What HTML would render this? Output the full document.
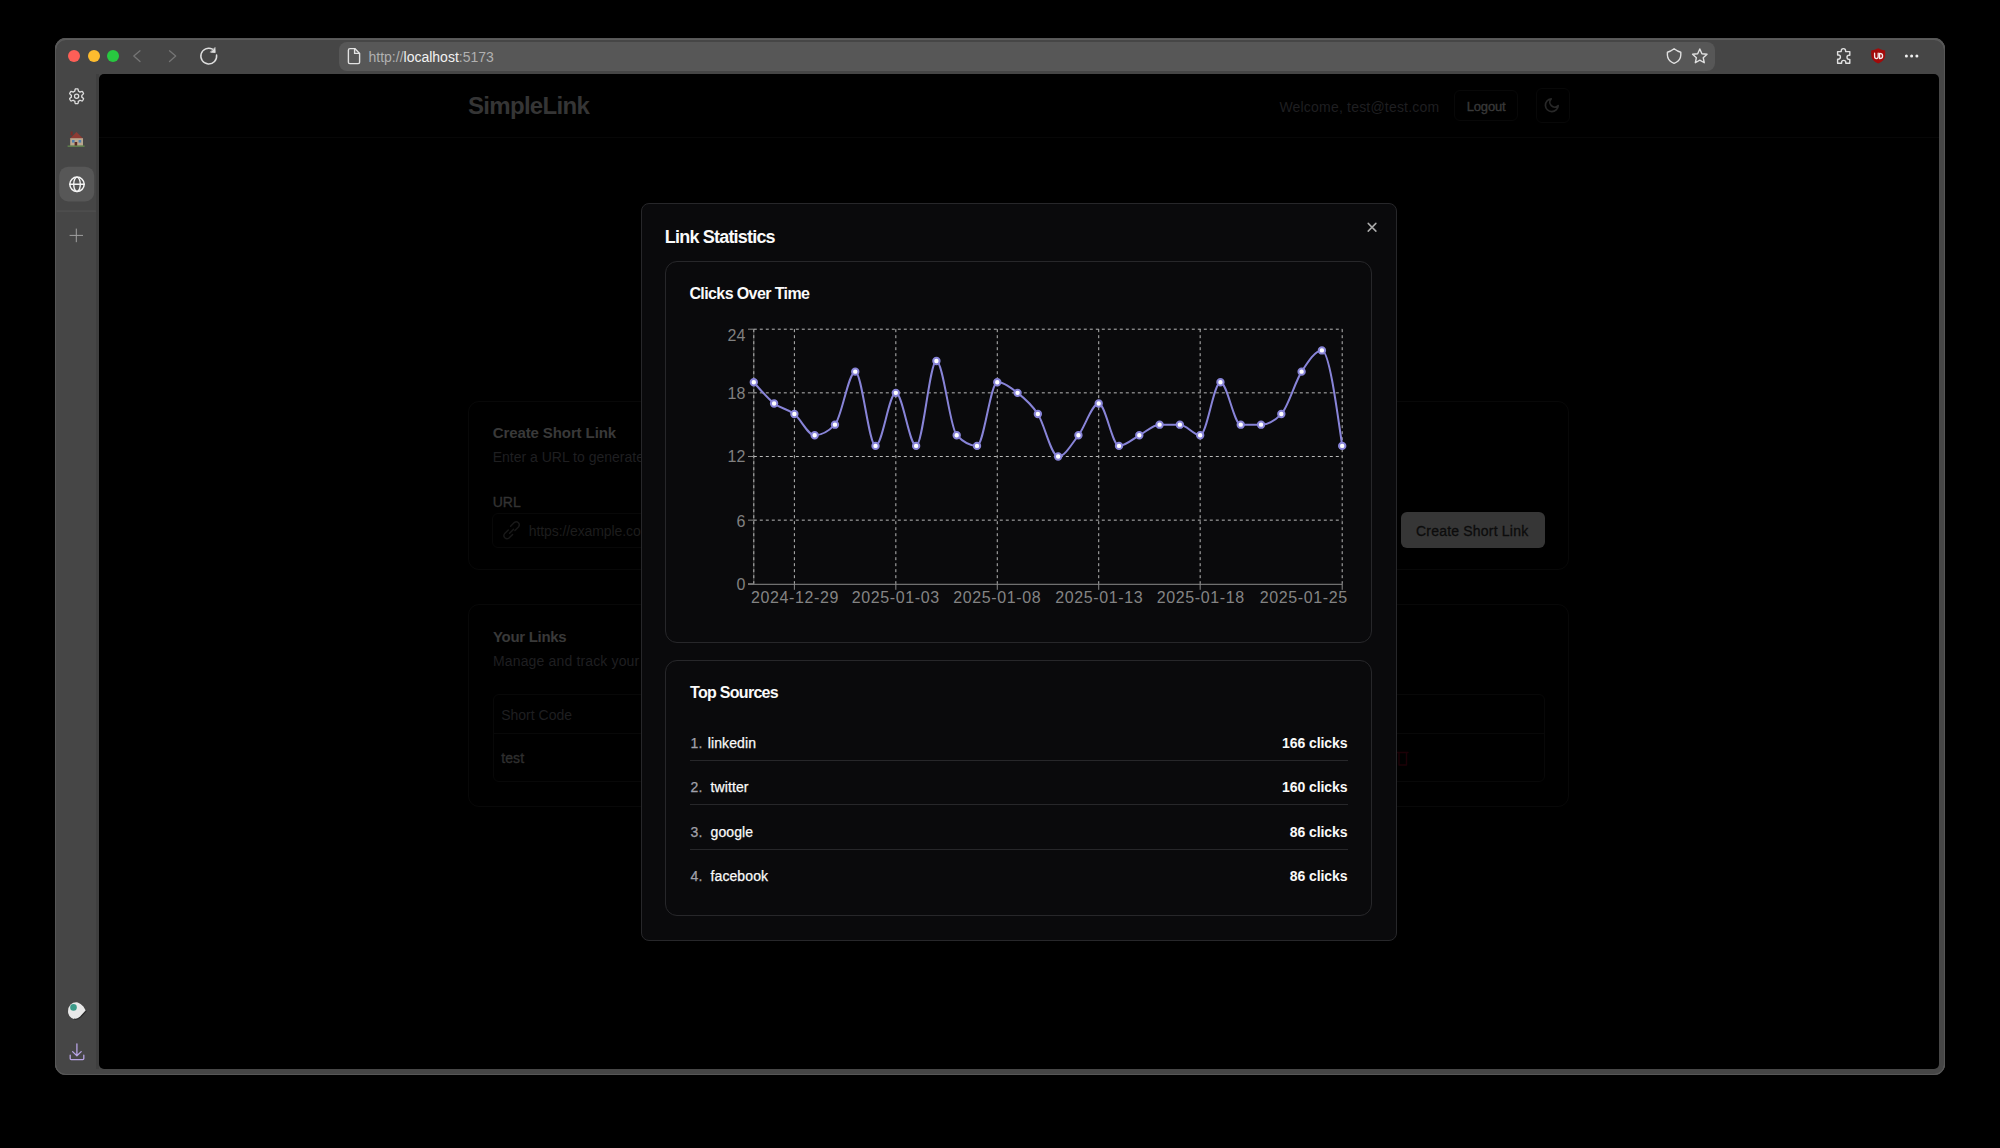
<!DOCTYPE html>
<html><head><meta charset="utf-8">
<style>
*{box-sizing:border-box;margin:0;padding:0}
html,body{width:2000px;height:1148px;background:#000;overflow:hidden;font-family:"Liberation Sans",sans-serif}
.a{position:absolute}
.t{position:absolute;white-space:pre}
svg{position:absolute;left:0;top:0}
</style></head><body>
<div class="a" style="left:55px;top:37.6px;width:1890px;height:1037.4px;background:#464646;border-radius:11px;box-shadow:inset 0 0 0 1px #575757,inset 0 1px 0 1px #5c5c5c"></div>
<div class="a" style="left:68px;top:50.2px;width:12px;height:12.0px;background:#fe5f57;border-radius:50%"></div>
<div class="a" style="left:87.7px;top:50.2px;width:12.0px;height:12.0px;background:#febc2e;border-radius:50%"></div>
<div class="a" style="left:107.2px;top:50.2px;width:12.0px;height:12.0px;background:#28c840;border-radius:50%"></div>
<div class="a" style="left:339px;top:41.5px;width:1375.5px;height:29.0px;background:#575757;border-radius:8px"></div>
<div class="t" style="left:368.5px;top:50.35px;font-size:14px;line-height:14px;color:#b0b0b0;font-weight:400;letter-spacing:0px;">http://<span style="color:#f2f2f2">localhost</span>:5173</div>
<div class="a" style="left:95.5px;top:74px;width:3.0px;height:995px;background:#3f3f3f"></div>
<div class="a" style="left:98.5px;top:74px;width:1840.3px;height:995px;background:#000;border-radius:5px"></div>
<div class="t" style="left:468px;top:93.98px;font-size:24px;line-height:24px;color:#353535;font-weight:700;letter-spacing:-0.7px;">SimpleLink</div>
<div class="a" style="left:98.5px;top:137px;width:1840.0px;height:1px;background:#070707"></div>
<div class="t" style="left:1279.4px;top:99.65px;font-size:14px;line-height:14px;color:#1f1f21;font-weight:400;letter-spacing:0.2px;">Welcome, test@test.com</div>
<div class="a" style="left:1454px;top:89.6px;width:64px;height:31.0px;border:1px solid #080808;border-radius:6px"></div>
<div class="t" style="left:1466.8px;top:99.60px;font-size:13px;line-height:13px;color:#393939;font-weight:400;letter-spacing:-0.2px;-webkit-text-stroke:0.35px #393939">Logout</div>
<div class="a" style="left:1535.5px;top:88px;width:34.09999999999991px;height:35px;border:1px solid #080808;border-radius:6px"></div>
<div class="a" style="left:468px;top:400.5px;width:1101px;height:169.79999999999995px;border:1px solid #080808;border-radius:11px"></div>
<div class="t" style="left:492.7px;top:424.70px;font-size:15px;line-height:15px;color:#393939;font-weight:700;letter-spacing:-0.1px;">Create Short Link</div>
<div class="t" style="left:492.7px;top:449.55px;font-size:14px;line-height:14px;color:#1f1f21;font-weight:400;letter-spacing:0px;">Enter a URL to generate a short link</div>
<div class="t" style="left:492.7px;top:494.55px;font-size:14px;line-height:14px;color:#333333;font-weight:400;letter-spacing:0px;-webkit-text-stroke:0.35px #333333">URL</div>
<div class="a" style="left:492px;top:512.8px;width:893px;height:34.90000000000009px;border:1px solid #080808;border-radius:6px"></div>
<div class="t" style="left:528.8px;top:523.65px;font-size:14px;line-height:14px;color:#1d1d1d;font-weight:400;letter-spacing:-0.1px;">https://example.com</div>
<div class="a" style="left:1401px;top:512.3px;width:144px;height:35.40000000000009px;background:#363636;border-radius:6px"></div>
<div class="t" style="left:1416px;top:523.65px;font-size:14px;line-height:14px;color:#0c0c0c;font-weight:400;letter-spacing:0.2px;-webkit-text-stroke:0.3px #0c0c0c">Create Short Link</div>
<div class="a" style="left:468px;top:603.6px;width:1101px;height:203.10000000000002px;border:1px solid #080808;border-radius:11px"></div>
<div class="t" style="left:493px;top:629.30px;font-size:15px;line-height:15px;color:#393939;font-weight:700;letter-spacing:-0.3px;">Your Links</div>
<div class="t" style="left:493px;top:654.05px;font-size:14px;line-height:14px;color:#1f1f21;font-weight:400;letter-spacing:0.15px;">Manage and track your shortened links</div>
<div class="a" style="left:492.6px;top:693.7px;width:1052.1999999999998px;height:88.09999999999991px;border:1px solid #080808;border-radius:6px"></div>
<div class="a" style="left:493.6px;top:733.4px;width:1050.1999999999998px;height:1.0px;background:#080808"></div>
<div class="t" style="left:501.2px;top:708.15px;font-size:14px;line-height:14px;color:#1f1f21;font-weight:400;letter-spacing:0px;">Short Code</div>
<div class="t" style="left:501.2px;top:751.35px;font-size:14px;line-height:14px;color:#2f2f2f;font-weight:400;letter-spacing:0.1px;-webkit-text-stroke:0.35px #2f2f2f">test</div>
<svg width="2000" height="1148" viewBox="0 0 2000 1148" fill="none" stroke-linecap="round" stroke-linejoin="round">
<path d="M140,50.8 L133.8,56 L140,61.5" stroke="#757575" stroke-width="1.3"/>
<path d="M169.5,50.8 L175.7,56 L169.5,61.5" stroke="#757575" stroke-width="1.3"/>
<path d="M216.57,55.00 A7.9,7.9 0 1 1 212.46,49.12" stroke="#dedede" stroke-width="1.5"/>
<path d="M215,47.9 L215.2,52.6 L210.8,52.2 Z" fill="#dedede" stroke="#dedede" stroke-width="0.8"/>
<path d="M350,48.6 L354.8,48.6 L359.6,53.6 L359.6,62.2 Q359.6,63.6 358.2,63.6 L349.8,63.6 Q348.4,63.6 348.4,62.2 L348.4,50.2 Q348.4,48.6 350,48.6 Z" stroke="#e2e2e2" stroke-width="1.4"/>
<path d="M354.6,48.8 L354.6,53.4 L359.4,53.4" stroke="#e2e2e2" stroke-width="1.4"/>
<path d="M1674.1,48.8 Q1670.5,51.6 1667.4,52.3 Q1667.2,55.5 1667.8,57.6 Q1669.2,61.5 1674.1,63.4 Q1679,61.5 1680.4,57.6 Q1681,55.5 1680.8,52.3 Q1677.7,51.6 1674.1,48.8 Z" stroke="#e0e0e0" stroke-width="1.4"/>
<path d="M1699.80,49.00 L1701.92,53.69 L1707.03,54.25 L1703.22,57.71 L1704.27,62.75 L1699.80,60.20 L1695.33,62.75 L1696.38,57.71 L1692.57,54.25 L1697.68,53.69 Z" stroke="#e0e0e0" stroke-width="1.4"/>
<path d="M1841.2,50.8 Q1841.2,48.6 1843.4,48.6 Q1845.6,48.6 1845.6,50.8 L1845.6,51.6 L1849.8,51.6 L1849.8,55.2 L1849,55.2 Q1847,55.2 1847,57.3 Q1847,59.4 1849,59.4 L1849.8,59.4 L1849.8,63.2 L1845.8,63.2 L1845.8,62.4 Q1845.8,60.4 1843.7,60.4 Q1841.6,60.4 1841.6,62.4 L1841.6,63.2 L1837.6,63.2 L1837.6,59.2 L1838.4,59.2 Q1840.4,59.2 1840.4,57.1 Q1840.4,55 1838.4,55 L1837.6,55 L1837.6,51.6 L1841.2,51.6 Z" stroke="#e0e0e0" stroke-width="1.4"/>
<path d="M1878.2,48.3 Q1881.8,50.3 1885.2,50.6 L1885.2,55 Q1885,60.8 1878.2,63.6 Q1871.4,60.8 1871.2,55 L1871.2,50.6 Q1874.6,50.3 1878.2,48.3 Z" fill="#a30a0a"/>
<path d="M1874.6,53.2 L1874.6,56.6 Q1874.6,58.6 1876.4,58.6 Q1878.2,58.6 1878.2,56.6 L1878.2,53.2" stroke="#f4eaea" stroke-width="1.3"/>
<path d="M1879.6,53.4 L1879.6,58.6 Q1882.6,58.6 1882.6,56 Q1882.6,53.4 1879.6,53.4" stroke="#f4eaea" stroke-width="1.3"/>
<circle cx="1906.4" cy="56.1" r="1.5" fill="#f0f0f0"/>
<circle cx="1911.6" cy="56.1" r="1.5" fill="#f0f0f0"/>
<circle cx="1916.9" cy="56.1" r="1.5" fill="#f0f0f0"/>
<path d="M76.60,88.80 L76.92,88.81 L77.24,88.83 L77.57,88.86 L77.88,88.91 L78.09,89.47 L78.24,90.07 L78.35,90.66 L78.41,91.22 L78.63,91.30 L78.84,91.40 L79.05,91.50 L79.25,91.61 L79.45,91.73 L79.64,91.86 L79.83,92.00 L80.01,92.14 L80.52,91.92 L81.09,91.71 L81.68,91.54 L82.27,91.44 L82.47,91.70 L82.66,91.96 L82.84,92.22 L83.01,92.50 L83.16,92.78 L83.31,93.07 L83.44,93.37 L83.55,93.67 L83.17,94.13 L82.73,94.56 L82.27,94.94 L81.82,95.28 L81.85,95.51 L81.88,95.74 L81.89,95.97 L81.90,96.20 L81.89,96.43 L81.88,96.66 L81.85,96.89 L81.82,97.12 L82.27,97.46 L82.73,97.84 L83.17,98.27 L83.55,98.73 L83.44,99.03 L83.31,99.33 L83.16,99.62 L83.01,99.90 L82.84,100.18 L82.66,100.44 L82.47,100.70 L82.27,100.96 L81.68,100.86 L81.09,100.69 L80.52,100.48 L80.01,100.26 L79.83,100.40 L79.64,100.54 L79.45,100.67 L79.25,100.79 L79.05,100.90 L78.84,101.00 L78.63,101.10 L78.41,101.18 L78.35,101.74 L78.24,102.33 L78.09,102.93 L77.88,103.49 L77.57,103.54 L77.24,103.57 L76.92,103.59 L76.60,103.60 L76.28,103.59 L75.96,103.57 L75.63,103.54 L75.32,103.49 L75.11,102.93 L74.96,102.33 L74.85,101.74 L74.79,101.18 L74.57,101.10 L74.36,101.00 L74.15,100.90 L73.95,100.79 L73.75,100.67 L73.56,100.54 L73.37,100.40 L73.19,100.26 L72.68,100.48 L72.11,100.69 L71.52,100.86 L70.93,100.96 L70.73,100.70 L70.54,100.44 L70.36,100.18 L70.19,99.90 L70.04,99.62 L69.89,99.33 L69.76,99.03 L69.65,98.73 L70.03,98.27 L70.47,97.84 L70.93,97.46 L71.38,97.12 L71.35,96.89 L71.32,96.66 L71.31,96.43 L71.30,96.20 L71.31,95.97 L71.32,95.74 L71.35,95.51 L71.38,95.28 L70.93,94.94 L70.47,94.56 L70.03,94.13 L69.65,93.67 L69.76,93.37 L69.89,93.07 L70.04,92.78 L70.19,92.50 L70.36,92.22 L70.54,91.96 L70.73,91.70 L70.93,91.44 L71.52,91.54 L72.11,91.71 L72.68,91.92 L73.19,92.14 L73.37,92.00 L73.56,91.86 L73.75,91.73 L73.95,91.61 L74.15,91.50 L74.36,91.40 L74.57,91.30 L74.79,91.22 L74.85,90.66 L74.96,90.07 L75.11,89.47 L75.32,88.91 L75.63,88.86 L75.96,88.83 L76.28,88.81 L76.60,88.80 Z" stroke="#dcdcdc" stroke-width="1.35"/>
<circle cx="76.6" cy="96.2" r="2.1" stroke="#dcdcdc" stroke-width="1.3"/>
<rect x="59.3" y="166.7" width="34.9" height="34.8" rx="9" fill="#575757"/>
<circle cx="77" cy="184.3" r="7.2" stroke="#f4f4f4" stroke-width="1.5"/>
<ellipse cx="77" cy="184.3" rx="3.3" ry="7.2" stroke="#f4f4f4" stroke-width="1.4"/>
<path d="M69.8,184.3 L84.2,184.3" stroke="#f4f4f4" stroke-width="1.4"/>
<rect x="56.6" y="210.6" width="39.2" height="1" fill="#545454"/>
<path d="M76.3,228.6 L76.3,242.2 M69.6,235.4 L83,235.4" stroke="#a0a0a0" stroke-width="1" stroke-linecap="butt"/>
<path d="M69.5,139 L76.5,132 L83.5,139 Z" fill="#8e3b33"/>
<rect x="70.2" y="138.2" width="12.8" height="8" fill="#b9a78e"/>
<rect x="70.6" y="131.5" width="2" height="4" fill="#7a2d28"/>
<rect x="72" y="140" width="2.6" height="2.6" fill="#4f7fae"/>
<rect x="78.6" y="140" width="2.6" height="2.6" fill="#4f7fae"/>
<rect x="74.6" y="142" width="2.6" height="4.2" fill="#5a2a22"/>
<rect x="67.6" y="145.4" width="17" height="1.6" fill="#5d7d4c"/>
<path d="M70.5,1004.6 Q73.5,1001.8 77.8,1002.4 Q80.6,1003.2 83.4,1006.5 L86,1011 L80.5,1017 Q77,1019.8 74.5,1019.2 Q69.5,1018.2 68.2,1013.2 Q67.4,1008.2 70.5,1004.6 Z" fill="#e8e8e8"/>
<path d="M86,1011 L80.5,1017 Q77,1019.8 74.5,1019.2" stroke="#2a2a2a" stroke-width="1.2"/>
<circle cx="73.5" cy="1007.4" r="3.3" fill="#3a9a88"/>
<path d="M76.9,1043.8 L76.9,1055.6 M72.6,1051.6 L76.9,1055.8 L81.2,1051.6 M70.2,1055.2 L70.2,1058.6 Q70.2,1059.6 71.2,1059.6 L82.8,1059.6 Q83.8,1059.6 83.8,1058.6 L83.8,1055.2" stroke="#b7a3e3" stroke-width="1.3"/>
<path d="M1551.2,98.8 A6.4,6.4 0 1 0 1558.2,105.6 A4.8,4.8 0 0 1 1551.2,98.8 Z" stroke="#282828" stroke-width="1.7"/>
<path d="M510.6,526.2 L514.2,522.6 Q516.4,520.8 518.4,522.8 Q520.3,524.8 518.5,527 L514.9,530.6" stroke="#191919" stroke-width="1.4"/>
<path d="M512.6,534.4 L509,538 Q506.8,539.8 504.8,537.8 Q502.9,535.8 504.7,533.6 L508.3,530" stroke="#191919" stroke-width="1.4"/>
<path d="M509.6,533.2 L513.6,529.2" stroke="#191919" stroke-width="1.4"/>
<path d="M1397,752.5 L1408,752.5 M1399,752.5 L1399,765 L1406.5,765 L1406.5,752.5" stroke="#1c0006" stroke-width="1.4"/>
</svg>
<div class="a" style="left:641px;top:203.3px;width:755.5px;height:737.5px;background:#0a0a0c;border:1px solid #27272a;border-radius:8px"></div>
<div class="t" style="left:664.8px;top:227.96px;font-size:18px;line-height:18px;color:#fafafa;font-weight:700;letter-spacing:-0.8px;">Link Statistics</div>
<svg width="2000" height="1148" viewBox="0 0 2000 1148"><path d="M1368.2,223.4 L1375.9,231.1 M1375.9,223.4 L1368.2,231.1" stroke="#ababab" stroke-width="1.5" stroke-linecap="round"/></svg>
<div class="a" style="left:665px;top:260.8px;width:706.5999999999999px;height:382.40000000000003px;border:1px solid #27272a;border-radius:12px"></div>
<div class="t" style="left:689.4px;top:286.26px;font-size:16px;line-height:16px;color:#fafafa;font-weight:700;letter-spacing:-0.6px;">Clicks Over Time</div>
<div class="a" style="left:665px;top:660.3px;width:706.5999999999999px;height:255.9000000000001px;border:1px solid #27272a;border-radius:12px"></div>
<div class="t" style="left:690px;top:685.46px;font-size:16px;line-height:16px;color:#fafafa;font-weight:700;letter-spacing:-0.7px;">Top Sources</div>
<div class="t" style="left:690.6px;top:736.05px;font-size:14px;line-height:14px;color:#a1a1aa;font-weight:400;letter-spacing:0px;-webkit-text-stroke:0.25px #a1a1aa">1.</div>
<div class="t" style="left:707.8px;top:736.05px;font-size:14px;line-height:14px;color:#fafafa;font-weight:400;letter-spacing:0.1px;-webkit-text-stroke:0.25px #fafafa">linkedin</div>
<div class="t" style="right:652.5999999999999px;top:736.05px;font-size:14px;line-height:14px;color:#fafafa;font-weight:700;letter-spacing:-0.08px;">166 clicks</div>
<div class="a" style="left:690px;top:760.0px;width:657.5px;height:1.0px;background:#27272a"></div>
<div class="t" style="left:690.6px;top:780.35px;font-size:14px;line-height:14px;color:#a1a1aa;font-weight:400;letter-spacing:0px;-webkit-text-stroke:0.25px #a1a1aa">2.</div>
<div class="t" style="left:710.5px;top:780.35px;font-size:14px;line-height:14px;color:#fafafa;font-weight:400;letter-spacing:0.1px;-webkit-text-stroke:0.25px #fafafa">twitter</div>
<div class="t" style="right:652.5999999999999px;top:780.35px;font-size:14px;line-height:14px;color:#fafafa;font-weight:700;letter-spacing:-0.08px;">160 clicks</div>
<div class="a" style="left:690px;top:804.25px;width:657.5px;height:1.0px;background:#27272a"></div>
<div class="t" style="left:690.6px;top:824.65px;font-size:14px;line-height:14px;color:#a1a1aa;font-weight:400;letter-spacing:0px;-webkit-text-stroke:0.25px #a1a1aa">3.</div>
<div class="t" style="left:710.5px;top:824.65px;font-size:14px;line-height:14px;color:#fafafa;font-weight:400;letter-spacing:0.1px;-webkit-text-stroke:0.25px #fafafa">google</div>
<div class="t" style="right:652.5999999999999px;top:824.65px;font-size:14px;line-height:14px;color:#fafafa;font-weight:700;letter-spacing:-0.08px;">86 clicks</div>
<div class="a" style="left:690px;top:848.5px;width:657.5px;height:1.0px;background:#27272a"></div>
<div class="t" style="left:690.6px;top:868.95px;font-size:14px;line-height:14px;color:#a1a1aa;font-weight:400;letter-spacing:0px;-webkit-text-stroke:0.25px #a1a1aa">4.</div>
<div class="t" style="left:710.5px;top:868.95px;font-size:14px;line-height:14px;color:#fafafa;font-weight:400;letter-spacing:0.1px;-webkit-text-stroke:0.25px #fafafa">facebook</div>
<div class="t" style="right:652.5999999999999px;top:868.95px;font-size:14px;line-height:14px;color:#fafafa;font-weight:700;letter-spacing:-0.08px;">86 clicks</div>
<svg width="2000" height="1148" viewBox="0 0 2000 1148">
<line x1="753.8" y1="329.2" x2="753.8" y2="583.8" stroke="#4a4a4a"/>
<line x1="753.8" y1="520.15" x2="1342.2" y2="520.15" stroke="#b8b8b8" stroke-dasharray="3 3"/>
<line x1="753.8" y1="456.50" x2="1342.2" y2="456.50" stroke="#b8b8b8" stroke-dasharray="3 3"/>
<line x1="753.8" y1="392.85" x2="1342.2" y2="392.85" stroke="#b8b8b8" stroke-dasharray="3 3"/>
<line x1="753.8" y1="329.20" x2="1342.2" y2="329.20" stroke="#b8b8b8" stroke-dasharray="3 3"/>
<line x1="753.80" y1="329.2" x2="753.80" y2="583.8" stroke="#b8b8b8" stroke-dasharray="3 3"/>
<line x1="794.38" y1="329.2" x2="794.38" y2="583.8" stroke="#b8b8b8" stroke-dasharray="3 3"/>
<line x1="895.83" y1="329.2" x2="895.83" y2="583.8" stroke="#b8b8b8" stroke-dasharray="3 3"/>
<line x1="997.28" y1="329.2" x2="997.28" y2="583.8" stroke="#b8b8b8" stroke-dasharray="3 3"/>
<line x1="1098.72" y1="329.2" x2="1098.72" y2="583.8" stroke="#b8b8b8" stroke-dasharray="3 3"/>
<line x1="1200.17" y1="329.2" x2="1200.17" y2="583.8" stroke="#b8b8b8" stroke-dasharray="3 3"/>
<line x1="1342.20" y1="329.2" x2="1342.20" y2="583.8" stroke="#b8b8b8" stroke-dasharray="3 3"/>
<line x1="748" y1="583.80" x2="753.8" y2="583.80" stroke="#888"/>
<line x1="748" y1="520.15" x2="753.8" y2="520.15" stroke="#888"/>
<line x1="748" y1="456.50" x2="753.8" y2="456.50" stroke="#888"/>
<line x1="748" y1="392.85" x2="753.8" y2="392.85" stroke="#888"/>
<line x1="748" y1="329.20" x2="753.8" y2="329.20" stroke="#888"/>
<line x1="748" y1="584.3" x2="1342.2" y2="584.3" stroke="#8a8a8a"/>
<line x1="794.38" y1="583.8" x2="794.38" y2="589.8" stroke="#8a8a8a"/>
<line x1="895.83" y1="583.8" x2="895.83" y2="589.8" stroke="#8a8a8a"/>
<line x1="997.28" y1="583.8" x2="997.28" y2="589.8" stroke="#8a8a8a"/>
<line x1="1098.72" y1="583.8" x2="1098.72" y2="589.8" stroke="#8a8a8a"/>
<line x1="1200.17" y1="583.8" x2="1200.17" y2="589.8" stroke="#8a8a8a"/>
<line x1="1342.20" y1="583.8" x2="1342.20" y2="589.8" stroke="#8a8a8a"/>
</svg>
<div class="t" style="right:1254.6px;top:328.46px;font-size:16px;line-height:16px;color:#808080;font-weight:400;letter-spacing:0px;">24</div>
<div class="t" style="right:1254.6px;top:385.76px;font-size:16px;line-height:16px;color:#808080;font-weight:400;letter-spacing:0px;">18</div>
<div class="t" style="right:1254.6px;top:449.36px;font-size:16px;line-height:16px;color:#808080;font-weight:400;letter-spacing:0px;">12</div>
<div class="t" style="right:1254.6px;top:513.96px;font-size:16px;line-height:16px;color:#808080;font-weight:400;letter-spacing:0px;">6</div>
<div class="t" style="right:1254.6px;top:577.26px;font-size:16px;line-height:16px;color:#808080;font-weight:400;letter-spacing:0px;">0</div>
<div class="t" style="left:750.9px;top:590.06px;font-size:16px;line-height:16px;color:#848484;font-weight:400;letter-spacing:0.62px;">2024-12-29</div>
<div class="t" style="left:851.7px;top:590.06px;font-size:16px;line-height:16px;color:#848484;font-weight:400;letter-spacing:0.62px;">2025-01-03</div>
<div class="t" style="left:953.2px;top:590.06px;font-size:16px;line-height:16px;color:#848484;font-weight:400;letter-spacing:0.62px;">2025-01-08</div>
<div class="t" style="left:1055.2px;top:590.06px;font-size:16px;line-height:16px;color:#848484;font-weight:400;letter-spacing:0.62px;">2025-01-13</div>
<div class="t" style="left:1156.7px;top:590.06px;font-size:16px;line-height:16px;color:#848484;font-weight:400;letter-spacing:0.62px;">2025-01-18</div>
<div class="t" style="left:1259.7px;top:590.06px;font-size:16px;line-height:16px;color:#848484;font-weight:400;letter-spacing:0.62px;">2025-01-25</div>
<svg width="2000" height="1148" viewBox="0 0 2000 1148">
<path d="M753.80,382.24C760.56,390.20,767.33,398.15,774.09,403.46C780.85,408.76,787.62,408.76,794.38,414.07C801.14,419.37,807.91,435.28,814.67,435.28C821.43,435.28,828.20,431.75,834.96,424.67C841.72,417.60,848.49,371.63,855.25,371.63C862.01,371.63,868.77,445.89,875.54,445.89C882.30,445.89,889.06,392.85,895.83,392.85C902.59,392.85,909.35,445.89,916.12,445.89C922.88,445.89,929.64,361.02,936.41,361.02C943.17,361.02,949.93,428.21,956.70,435.28C963.46,442.36,970.22,445.89,976.99,445.89C983.75,445.89,990.51,382.24,997.28,382.24C1004.04,382.24,1010.80,387.55,1017.57,392.85C1024.33,398.15,1031.09,403.46,1037.86,414.07C1044.62,424.67,1051.38,456.50,1058.14,456.50C1064.91,456.50,1071.67,444.12,1078.43,435.28C1085.20,426.44,1091.96,403.46,1098.72,403.46C1105.49,403.46,1112.25,445.89,1119.01,445.89C1125.78,445.89,1132.54,438.82,1139.30,435.28C1146.07,431.75,1152.83,424.67,1159.59,424.67C1166.36,424.67,1173.12,424.67,1179.88,424.67C1186.65,424.67,1193.41,435.28,1200.17,435.28C1206.94,435.28,1213.70,382.24,1220.46,382.24C1227.23,382.24,1233.99,424.67,1240.75,424.67C1247.51,424.67,1254.28,424.67,1261.04,424.67C1267.80,424.67,1274.57,421.14,1281.33,414.07C1288.09,406.99,1294.86,382.24,1301.62,371.63C1308.38,361.02,1315.15,350.42,1321.91,350.42C1328.67,350.42,1335.44,398.15,1342.20,445.89" fill="none" stroke="#8884d8" stroke-width="2"/>
<circle cx="753.80" cy="382.24" r="3.2" fill="#ffffff" stroke="#8884d8" stroke-width="2"/>
<circle cx="774.09" cy="403.46" r="3.2" fill="#ffffff" stroke="#8884d8" stroke-width="2"/>
<circle cx="794.38" cy="414.07" r="3.2" fill="#ffffff" stroke="#8884d8" stroke-width="2"/>
<circle cx="814.67" cy="435.28" r="3.2" fill="#ffffff" stroke="#8884d8" stroke-width="2"/>
<circle cx="834.96" cy="424.67" r="3.2" fill="#ffffff" stroke="#8884d8" stroke-width="2"/>
<circle cx="855.25" cy="371.63" r="3.2" fill="#ffffff" stroke="#8884d8" stroke-width="2"/>
<circle cx="875.54" cy="445.89" r="3.2" fill="#ffffff" stroke="#8884d8" stroke-width="2"/>
<circle cx="895.83" cy="392.85" r="3.2" fill="#ffffff" stroke="#8884d8" stroke-width="2"/>
<circle cx="916.12" cy="445.89" r="3.2" fill="#ffffff" stroke="#8884d8" stroke-width="2"/>
<circle cx="936.41" cy="361.02" r="3.2" fill="#ffffff" stroke="#8884d8" stroke-width="2"/>
<circle cx="956.70" cy="435.28" r="3.2" fill="#ffffff" stroke="#8884d8" stroke-width="2"/>
<circle cx="976.99" cy="445.89" r="3.2" fill="#ffffff" stroke="#8884d8" stroke-width="2"/>
<circle cx="997.28" cy="382.24" r="3.2" fill="#ffffff" stroke="#8884d8" stroke-width="2"/>
<circle cx="1017.57" cy="392.85" r="3.2" fill="#ffffff" stroke="#8884d8" stroke-width="2"/>
<circle cx="1037.86" cy="414.07" r="3.2" fill="#ffffff" stroke="#8884d8" stroke-width="2"/>
<circle cx="1058.14" cy="456.50" r="3.2" fill="#ffffff" stroke="#8884d8" stroke-width="2"/>
<circle cx="1078.43" cy="435.28" r="3.2" fill="#ffffff" stroke="#8884d8" stroke-width="2"/>
<circle cx="1098.72" cy="403.46" r="3.2" fill="#ffffff" stroke="#8884d8" stroke-width="2"/>
<circle cx="1119.01" cy="445.89" r="3.2" fill="#ffffff" stroke="#8884d8" stroke-width="2"/>
<circle cx="1139.30" cy="435.28" r="3.2" fill="#ffffff" stroke="#8884d8" stroke-width="2"/>
<circle cx="1159.59" cy="424.67" r="3.2" fill="#ffffff" stroke="#8884d8" stroke-width="2"/>
<circle cx="1179.88" cy="424.67" r="3.2" fill="#ffffff" stroke="#8884d8" stroke-width="2"/>
<circle cx="1200.17" cy="435.28" r="3.2" fill="#ffffff" stroke="#8884d8" stroke-width="2"/>
<circle cx="1220.46" cy="382.24" r="3.2" fill="#ffffff" stroke="#8884d8" stroke-width="2"/>
<circle cx="1240.75" cy="424.67" r="3.2" fill="#ffffff" stroke="#8884d8" stroke-width="2"/>
<circle cx="1261.04" cy="424.67" r="3.2" fill="#ffffff" stroke="#8884d8" stroke-width="2"/>
<circle cx="1281.33" cy="414.07" r="3.2" fill="#ffffff" stroke="#8884d8" stroke-width="2"/>
<circle cx="1301.62" cy="371.63" r="3.2" fill="#ffffff" stroke="#8884d8" stroke-width="2"/>
<circle cx="1321.91" cy="350.42" r="3.2" fill="#ffffff" stroke="#8884d8" stroke-width="2"/>
<circle cx="1342.20" cy="445.89" r="3.2" fill="#ffffff" stroke="#8884d8" stroke-width="2"/>
</svg>
</body></html>
